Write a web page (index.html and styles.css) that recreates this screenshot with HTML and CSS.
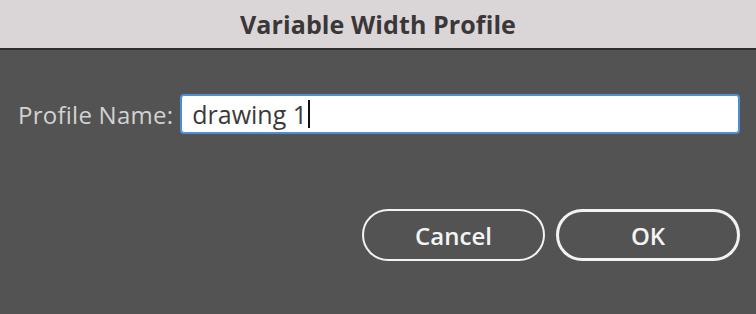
FILE: index.html
```html
<!DOCTYPE html>
<html>
<head>
<meta charset="utf-8">
<link rel="stylesheet" href="styles.css">
</head>
<body>
<div class="dialog">
  <div class="titlebar">Variable Width Profile</div>
  <div class="content">
    <div class="row">
      <label class="label">Profile Name:</label>
      <div class="field"><span class="value">drawing 1</span><span class="caret"></span></div>
    </div>
    <div class="buttons">
      <div class="btn">Cancel</div>
      <div class="btn primary">OK</div>
    </div>
  </div>
</div>
</body>
</html>
```
FILE: styles.css
```css
html, body {
  margin: 0;
  padding: 0;
  background: #535353;
}
.dialog {
  width: 756px;
  height: 314px;
  display: flex;
  flex-direction: column;
  font-family: "Open Sans", "Noto Sans", sans-serif;
}
.titlebar {
  height: 47px;
  background: #dad5d7;
  border-bottom: 2px solid #2f2f2f;
  display: flex;
  align-items: center;
  justify-content: center;
  font-size: 25px;
  font-weight: 700;
  letter-spacing: 0.1px;
  color: #3a3738;
  padding-bottom: 1px;
  box-sizing: content-box;
}
.content {
  flex: 1;
  padding: 44px 16px 0 18px;
  display: flex;
  flex-direction: column;
}
.row {
  display: flex;
  align-items: center;
  gap: 7px;
}
.label {
  font-size: 24px;
  letter-spacing: 0.25px;
  color: #d2d2d2;
}
.field {
  flex: 1;
  height: 36px;
  background: #ffffff;
  border: 2px solid #4a8fd8;
  border-radius: 4px;
  display: flex;
  align-items: center;
  padding-left: 10px;
}
.value {
  font-size: 25px;
  letter-spacing: 0px;
  color: #3a3a3a;
}
.caret {
  width: 2px;
  height: 28px;
  background: #111;
  margin-left: 1px;
}
.buttons {
  display: flex;
  justify-content: flex-end;
  gap: 11px;
  margin-top: 75px;
}
.btn {
  width: 179px;
  height: 48px;
  border: 2px solid #f2f2f2;
  border-radius: 26px;
  color: #f4f4f4;
  font-size: 24px;
  font-weight: 600;
  display: flex;
  align-items: center;
  justify-content: center;
}
.btn.primary {
  width: 178px;
  border-width: 3px;
  height: 46px;
}
```
